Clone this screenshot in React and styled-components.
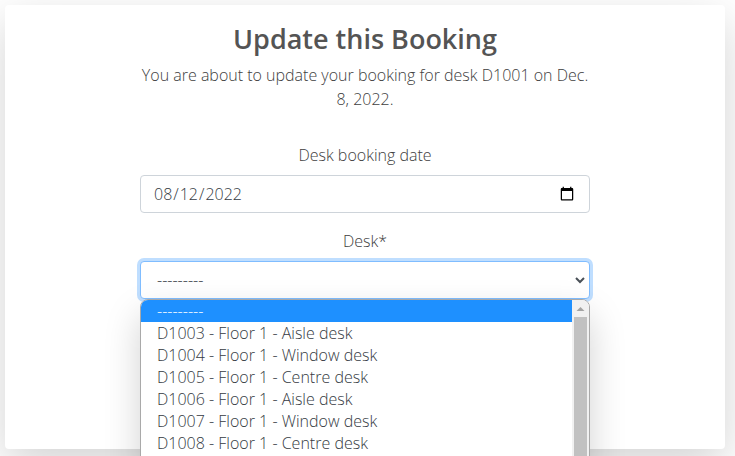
import React from "react";
import styled, { createGlobalStyle } from "styled-components";

const desks = [
  "---------",
  "D1003 - Floor 1 - Aisle desk",
  "D1004 - Floor 1 - Window desk",
  "D1005 - Floor 1 - Centre desk",
  "D1006 - Floor 1 - Aisle desk",
  "D1007 - Floor 1 - Window desk",
  "D1008 - Floor 1 - Centre desk",
];

const GlobalStyle = createGlobalStyle`
  *, *::before, *::after { box-sizing: border-box; }
  body {
    margin: 0;
    background: #fff;
    color: #404040;
    font: 330 16px/24px "Open Sans", "Noto Sans", sans-serif;
  }
`;

const Page = styled.main`
  height: 100vh;
  padding: 5px 10px 5px 5px;
  overflow: hidden;
`;

const Card = styled.section`
  padding: 16px 24px 150px;
  border-radius: 4px;
  background: #fff;
  box-shadow: 0 16px 48px rgba(0, 0, 0, 0.175);
`;

const Content = styled.div`
  max-width: 450px;
  margin: 0 auto;
  text-align: center;
`;

const Title = styled.h1`
  margin: 0 0 6px;
  color: #545454;
  font-size: 27px;
  line-height: 36px;
  font-weight: 560;
`;

const Intro = styled.p`
  margin: 0 0 32px;
`;

const Form = styled.form`
  display: grid;
  gap: 16px;
`;

const Field = styled.div`
  position: relative;
`;

const Label = styled.label`
  display: block;
  margin-bottom: 8px;
`;

const DateInput = styled.input`
  display: block;
  width: 100%;
  height: 38px;
  padding: 6px 12px;
  border: 1px solid #ced4da;
  border-radius: 4px;
  background: #fff;
  color: #343a42;
  font: inherit;
`;

const SelectWrap = styled.div`
  position: relative;
`;

const Select = styled.select`
  appearance: none;
  display: block;
  width: 100%;
  height: 38px;
  padding: 6px 16px;
  border: 1px solid #80bdff;
  border-radius: 4px;
  outline: 0;
  background: #fff;
  color: #343a42;
  font: inherit;
  box-shadow: 0 0 0 3px #bfdeff;
`;

const Chevron = styled.svg`
  position: absolute;
  top: 15px;
  right: 5px;
  width: 10px;
  height: 8px;
  pointer-events: none;
`;

const Popup = styled.div`
  position: absolute;
  top: 100%;
  left: 0;
  right: 0;
  display: flex;
  height: 420px;
  overflow: hidden;
  border: 1px solid #a9a9a9;
  border-radius: 8px;
  background: #fff;
  box-shadow: 0 16px 36px rgba(0, 0, 0, 0.18);
`;

const Options = styled.ul`
  flex: 1;
  margin: 0;
  padding: 0;
  list-style: none;
  text-align: left;
`;

const Option = styled.li`
  height: 22px;
  padding: 0 16px;
  line-height: 22px;
  color: ${({ $active }) => ($active ? "#fff" : "#343a42")};
  background: ${({ $active }) => ($active ? "#1e90ff" : "#fff")};
`;

const ScrollTrack = styled.div`
  display: flex;
  flex-direction: column;
  width: 17px;
  padding: 0 2px;
  background: #f1f1f1;
`;

const ScrollArrow = styled.svg`
  flex: none;
  width: 13px;
  height: 17px;
`;

const ScrollThumb = styled.div`
  flex: 1;
  background: #c1c1c1;
`;

export default function App() {
  return (
    <Page>
      <GlobalStyle />
      <Card>
        <Content>
          <Title>Update this Booking</Title>
          <Intro>You are about to update your booking for desk D1001 on Dec. 8, 2022.</Intro>
          <Form>
            <Field>
              <Label htmlFor="date">Desk booking date</Label>
              <DateInput id="date" type="date" defaultValue="2022-08-12" />
            </Field>
            <Field>
              <Label htmlFor="desk">Desk*</Label>
              <SelectWrap>
                <Select id="desk" required>
                  {desks.map((desk) => (
                    <option key={desk}>{desk}</option>
                  ))}
                </Select>
                <Chevron viewBox="0 0 10 8" aria-hidden="true">
                  <path d="M1 2l4 4 4-4" fill="none" stroke="#495057" strokeWidth="2" />
                </Chevron>
              </SelectWrap>
              <Popup>
                <Options role="listbox" aria-label="Desk">
                  {desks.map((desk, i) => (
                    <Option key={desk} role="option" aria-selected={i === 0} $active={i === 0}>
                      {desk}
                    </Option>
                  ))}
                </Options>
                <ScrollTrack>
                  <ScrollArrow viewBox="0 0 13 17" aria-hidden="true">
                    <path d="M2.5 11l4-4 4 4z" fill="#a3a3a3" />
                  </ScrollArrow>
                  <ScrollThumb />
                </ScrollTrack>
              </Popup>
            </Field>
          </Form>
        </Content>
      </Card>
    </Page>
  );
}
